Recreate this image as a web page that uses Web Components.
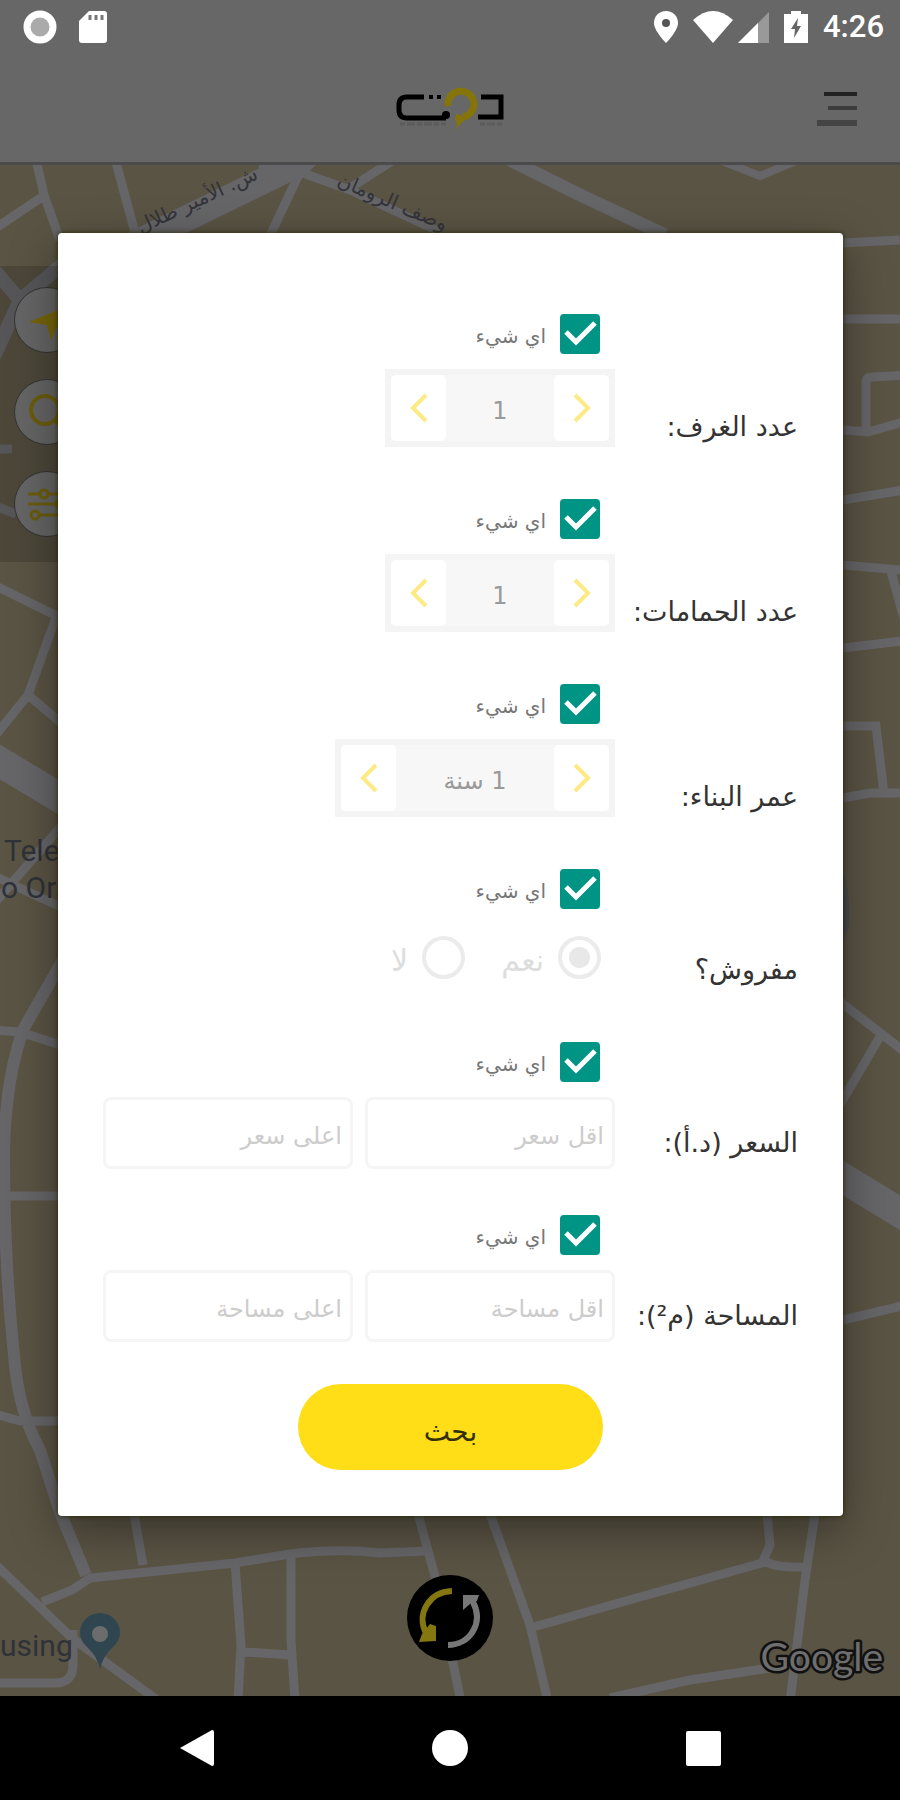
<!DOCTYPE html>
<html lang="ar">
<head>
<meta charset="utf-8">
<meta name="viewport" content="width=device-width, initial-scale=1">
<title>دوت</title>
<style>
  body {
    margin: 0;
    min-height: 100vh;
    display: flex;
    flex-direction: column;
    background: #000;
    font-family: "DejaVu Sans", "Noto Sans", sans-serif;
  }

  .stage {
    flex: 1;
    display: grid;
    grid-template-columns: minmax(0, 1fr);
  }

  .stage > * {
    grid-area: 1 / 1;
  }
</style>
</head>
<body>
  <status-bar time="4:26"></status-bar>
  <app-header></app-header>
  <main class="stage">
    <map-view></map-view>
    <filter-dialog>
      <filter-row label="عدد الغرف:"><number-stepper value="1"></number-stepper></filter-row>
      <filter-row label="عدد الحمامات:"><number-stepper value="1"></number-stepper></filter-row>
      <filter-row label="عمر البناء:"><number-stepper value="1 سنة" wide></number-stepper></filter-row>
      <filter-row label="مفروش؟"><yes-no></yes-no></filter-row>
      <filter-row label="السعر (د.أ):"><range-inputs min="اقل سعر" max="اعلى سعر"></range-inputs></filter-row>
      <filter-row label="المساحة (م²):"><range-inputs min="اقل مساحة" max="اعلى مساحة"></range-inputs></filter-row>
    </filter-dialog>
  </main>
  <nav-bar></nav-bar>

<script>
// Status bar at the very top: notification icons, system icons, clock
class StatusBar extends HTMLElement {
  constructor() {
    super();
    this.attachShadow({ mode: "open" });

    this.shadowRoot.innerHTML = `
      <style>
        :host {
          display: flex;
          align-items: center;
          justify-content: space-between;
          height: 54px;
          padding: 0 16px 0 22px;
          background: #676767;
          color: #fff;
          font-family: Roboto, sans-serif;
        }

        div {
          display: flex;
          align-items: center;
        }

        .left { gap: 20px; }
        .right { gap: 14px; }
        .net { gap: 4px; }
        svg { display: block; }

        time {
          font-size: 31px;
          font-weight: 500;
          line-height: 36px;
        }
      </style>
      <div class="left">
        <svg width="36" height="36"><circle cx="18" cy="18" r="13" fill="#aaa" stroke="#fff" stroke-width="7"/></svg>
        <svg width="30" height="34">
          <path d="M11 1H26Q29 1 29 4V30Q29 33 26 33H4Q1 33 1 30V11Z" fill="#fff"/>
          <path d="M12 5v5M18 5v5M24 5v5" stroke="#777" stroke-width="3"/>
        </svg>
      </div>
      <div class="right">
        <svg width="26" height="34">
          <path d="M13 1C6 1 1 6 1 13C1 21 13 33 13 33S25 21 25 13C25 6 20 1 13 1Z" fill="#fff"/>
          <circle cx="13" cy="13" r="4" fill="#555"/>
        </svg>
        <div class="net">
          <svg width="40" height="34"><path d="M0 10Q20-8 40 10L20 33Z" fill="#fff"/></svg>
          <svg width="32" height="34">
            <path d="M32 2V33H1Z" fill="#999"/>
            <path d="M21 13V33H1Z" fill="#fff"/>
          </svg>
        </div>
        <svg width="26" height="34">
          <path d="M8 1H18V4H25V33H1V4H8Z" fill="#fff"/>
          <path d="M15 8L8 19H12L11 28L18 16H14Z" fill="#666"/>
        </svg>
        <time></time>
      </div>
    `;
  }

  connectedCallback() {
    this.shadowRoot.querySelector("time").textContent = this.getAttribute("time") || "";
  }
}

// App header: logo in the middle, menu button on the right
class AppHeader extends HTMLElement {
  constructor() {
    super();
    this.attachShadow({ mode: "open" });

    this.shadowRoot.innerHTML = `
      <style>
        :host {
          display: grid;
          grid-template-columns: 1fr auto 1fr;
          align-items: center;
          height: 108px;
          padding: 0 42px;
          background: #676767;
          border-bottom: 3px solid #4b4b4b;
        }

        svg { display: block; }
        .logo { grid-column: 2; }

        button {
          justify-self: end;
          padding: 0;
          border: 0;
          background: none;
        }
      </style>
      <svg class="logo" width="112" height="48" role="img" aria-label="دوت" fill="none">
        <path d="M30 13H13Q5 13 5 21V26Q5 34 13 34H52" stroke="#000" stroke-width="5"/>
        <circle cx="52" cy="31" r="4" fill="#000"/>
        <path d="M35 13H39M43 13H47" stroke="#000" stroke-width="4"/>
        <path d="M54 22A13 13 0 1 1 69 33" stroke="#84740a" stroke-width="7"/>
        <path d="M62 30L75 34Q66 38 62 46Q64 39 61 35Z" fill="#84740a"/>
        <path d="M87 13H107V33H84" stroke="#000" stroke-width="5"/>
        <path d="M6 40H52M86 40H108" stroke="#5c5c5c" stroke-width="3" stroke-dasharray="5 2 8 2"/>
      </svg>
      <button type="button" aria-label="القائمة">
        <svg width="42" height="38">
          <path d="M8 5H41" stroke="#222" stroke-width="4"/>
          <path d="M12 19H41" stroke="#3c3c3c" stroke-width="4"/>
          <path d="M1 34H41" stroke="#444" stroke-width="6"/>
        </svg>
      </button>
    `;
  }
}

// Map with its streets, place labels and floating buttons
class MapView extends HTMLElement {
  constructor() {
    super();
    this.attachShadow({ mode: "open" });

    this.shadowRoot.innerHTML = `
      <style>
        :host {
          display: block;
          position: relative;
          overflow: hidden;
          background: #5a5444;
        }

        .map {
          position: absolute;
          inset: 0;
          width: 100%;
          height: 100%;
        }

        .tools {
          position: absolute;
          top: 101px;
          left: 0;
          display: flex;
          flex-direction: column;
          gap: 26px;
          padding: 21px 14px 25px;
          background: #00000026;
        }

        button {
          display: grid;
          place-items: center;
          padding: 0;
          border: 0;
          border-radius: 50%;
        }

        .tools button {
          width: 66px;
          height: 66px;
          background: #656565;
          border: 1px solid #333;
        }

        .refresh {
          position: absolute;
          bottom: 35px;
          left: calc(50% - 43px);
          width: 86px;
          height: 86px;
          background: #000;
        }
      </style>
      <svg class="map" viewBox="0 165 900 1531" preserveAspectRatio="xMidYMid slice">
        <g fill="none" stroke="#666568" stroke-width="9">
          <path d="M-10 232L42 197M35 155L44 195L60 240M114 155L137 240M300 172L268 240M300 172L350 190L440 232M350 188L400 156"/>
          <path d="M130 246L300 163" stroke-width="26"/>
          <path d="M258 163H318L300 180L262 184Z" fill="#666568" stroke="none"/>
          <path d="M500 155L580 195L665 235" stroke-width="13"/>
          <path d="M722 161L760 176L796 161" stroke-width="8"/>
          <path d="M843 243L900 240M843 319H900M843 430L868 432L910 420M866 430V382Q866 377 873 377L910 375"/>
          <path d="M843 500L910 489M843 565L910 571M890 568L910 640M843 648L910 640"/>
          <path d="M843 726H876L884 794M843 798L870 793H900"/>
          <path d="M830 994L910 1056M881 1035L838 1108M843 1320L910 1304"/>
          <path d="M820 1164L920 1225" stroke-width="30"/>
          <path d="M-10 365L20 300L70 258M-6 270L20 300" stroke-width="14"/>
          <path d="M0 449H12M-5 506L16 514"/>
          <path d="M-10 583L65 620M58 612L28 695L-10 742M28 695L65 726"/>
          <path d="M-20 750L80 810" stroke-width="30"/>
          <path d="M65 822L-10 908M-10 874L65 909"/>
          <path d="M64 958L24 1028Q6 1075 4 1150Q4 1260 14 1355Q18 1410 40 1450L60 1512L86 1575" stroke-width="12"/>
          <path d="M-5 1030L20 1032L60 1045M6 1196H60M-5 1414L20 1421H60"/>
          <path d="M-10 1559L72 1638L164 1705M42 1602L72 1590L90 1578L235 1563L290 1554Q340 1548 380 1553L428 1551"/>
          <path d="M134 1514L143 1565M235 1563L241 1645L238 1700M291 1556V1640L295 1700M245 1652L290 1655M418 1514L436 1580L461 1702"/>
          <path d="M73 1630V1665Q73 1683 55 1683H0"/>
          <path d="M490 1514L530 1625L548 1702M530 1628L640 1597L762 1563L770 1545L767 1514M765 1561Q775 1568 805 1567M815 1514L805 1580L790 1702M610 1698L690 1680L770 1668"/>
        </g>
        <g fill="#33333a" font-family="DejaVu Sans, sans-serif" font-size="20" text-anchor="middle">
          <text transform="translate(200 206) rotate(-25)">ش. الأمير طلال</text>
          <text transform="translate(390 208) rotate(23)">وصف الرومان</text>
        </g>
        <g fill="#2f3238" font-family="Roboto, sans-serif" font-size="30">
          <text x="4" y="861">Tele</text>
          <text x="1" y="898">o Ora</text>
          <text x="0" y="1656">using</text>
        </g>
        <path d="M843 870Q850 890 849 925L843 945Z" fill="#4c4d55"/>
        <path d="M100 1669Q97 1656 88 1648Q80 1641 80 1633A20 20 0 1 1 120 1633Q120 1641 112 1648Q103 1656 100 1669Z" fill="#2f4650"/>
        <circle cx="100" cy="1634" r="8" fill="#6c6c6c"/>
        <text x="883" y="1671" text-anchor="end" font-family="Lato, sans-serif" font-size="39" fill="#6e6e6e" stroke="#111" stroke-width="5" paint-order="stroke" stroke-linejoin="round">Google</text>
      </svg>
      <div class="tools">
        <button type="button" aria-label="موقعي">
          <svg width="44" height="44"><path d="M4 24L40 9L26 42L22 27Z" fill="#75650a"/></svg>
        </button>
        <button type="button" aria-label="بحث في الخريطة">
          <svg width="44" height="44" fill="none" stroke="#6b5d0c" stroke-width="4"><circle cx="20" cy="20" r="14"/><path d="M30 30L41 41"/></svg>
        </button>
        <button type="button" aria-label="تصفية">
          <svg width="44" height="44" fill="none" stroke="#6b5d0c" stroke-width="3">
            <path d="M3 12H14M24 12H41M3 22H30M40 22H43M14 33H41"/>
            <circle cx="19" cy="12" r="4"/><circle cx="35" cy="22" r="4"/><circle cx="10" cy="33" r="4"/>
          </svg>
        </button>
      </div>
      <button class="refresh" type="button" aria-label="تحديث">
        <svg width="86" height="86" fill="none" stroke-width="6">
          <path d="M45 16C22 17 9 39 19 58" stroke="#847710"/>
          <path d="M12 67L15 59L23 49L29 51V66Z" fill="#847710"/>
          <path d="M41 70C63 70 77 48 66 27" stroke="#777"/>
          <path d="M56 35V20L72 20L70 26L63 29Z" fill="#777"/>
        </svg>
      </button>
    `;
  }
}

// White card that holds the filter rows and the search button
class FilterDialog extends HTMLElement {
  constructor() {
    super();
    this.attachShadow({ mode: "open" });

    this.shadowRoot.innerHTML = `
      <style>
        :host {
          display: block;
          position: relative;
          align-self: start;
          margin: 68px 57px 180px 58px;
          padding: 81px 45px 46px;
          background: #fff;
          border-radius: 4px;
          box-shadow: 0 0 5px #2a2706, 0 14px 48px #0006;
          direction: rtl;
        }

        form {
          display: flex;
          flex-direction: column;
          gap: 46px;
        }

        button {
          align-self: center;
          width: 305px;
          height: 86px;
          margin-top: -4px;
          padding: 8px 0 0;
          border: 0;
          border-radius: 43px;
          background: #ffdd17;
          color: #33300a;
          font: inherit;
          font-size: 28px;
        }
      </style>
      <form>
        <slot></slot>
        <button type="button">بحث</button>
      </form>
    `;
  }
}

// One filter: its caption, the "anything" tick box and the control below it
class FilterRow extends HTMLElement {
  constructor() {
    super();
    this.attachShadow({ mode: "open" });

    this.shadowRoot.innerHTML = `
      <style>
        :host {
          display: flex;
          align-items: flex-end;
        }

        .caption {
          flex: 0 0 183px;
          padding-bottom: 8px;
          color: #333;
          font-size: 27px;
          line-height: 36px;
          white-space: nowrap;
        }

        .control {
          flex: 1;
          min-width: 0;
          display: flex;
          flex-direction: column;
          align-items: flex-start;
          gap: 15px;
        }

        label {
          display: grid;
          grid-template-columns: 40px auto;
          column-gap: 14px;
          align-items: center;
          margin-right: 15px;
          color: #777;
          font-size: 20px;
        }

        span { line-height: 36px; }
        label span { padding-top: 4px; }

        input, svg {
          grid-area: 1 / 1;
          width: 40px;
          height: 40px;
          margin: 0;
        }

        input {
          appearance: none;
          box-sizing: border-box;
          border-radius: 4px;
          background: #fff;
          border: 4px solid #009485;
        }

        input:checked { background: #009485; }
        input:not(:checked) + svg { visibility: hidden; }
        svg { pointer-events: none; }
        ::slotted(*) { align-self: stretch; }
      </style>
      <span class="caption" id="caption"></span>
      <div class="control" role="group" aria-labelledby="caption">
        <label>
          <input type="checkbox" checked>
          <svg viewBox="0 0 40 40" fill="none"><path d="M6 18L16 28L35 9" stroke="#fff" stroke-width="5"/></svg>
          <span>اي شيء</span>
        </label>
        <slot></slot>
      </div>
    `;
  }

  connectedCallback() {
    this.shadowRoot.getElementById("caption").textContent = this.getAttribute("label") || "";
  }
}

// Value with a step button on each side
class NumberStepper extends HTMLElement {
  constructor() {
    super();
    this.attachShadow({ mode: "open" });

    this.shadowRoot.innerHTML = `
      <style>
        :host {
          display: block;
          height: 84px;
        }

        .box {
          display: flex;
          align-items: stretch;
          box-sizing: border-box;
          width: 230px;
          height: 78px;
          border: 6px solid #f4f4f4;
          background: #f7f7f7;
        }

        :host([wide]) .box { width: 280px; }

        button {
          display: grid;
          place-items: center;
          width: 55px;
          padding: 0;
          border: 0;
          border-radius: 5px;
          background: #fff;
        }

        output {
          flex: 1;
          padding-top: 6px;
          color: #999;
          font-size: 24px;
          line-height: 60px;
          text-align: center;
        }
      </style>
      <div class="box">
        <button type="button" disabled aria-label="زيادة">
          <svg width="18" height="30" fill="none"><path d="M2 2L15 15L2 28" stroke="#fdea85" stroke-width="4"/></svg>
        </button>
        <output></output>
        <button type="button" disabled aria-label="إنقاص">
          <svg width="18" height="30" fill="none"><path d="M16 2L3 15L16 28" stroke="#fdea85" stroke-width="4"/></svg>
        </button>
      </div>
    `;
  }

  connectedCallback() {
    this.shadowRoot.querySelector("output").textContent = this.getAttribute("value") || "";
  }
}

// Yes / no radio pair
class YesNo extends HTMLElement {
  constructor() {
    super();
    this.attachShadow({ mode: "open" });

    this.shadowRoot.innerHTML = `
      <style>
        :host {
          display: flex;
          align-items: center;
          gap: 36px;
          box-sizing: border-box;
          height: 72px;
          padding: 0 14px 6px 0;
        }

        label {
          display: flex;
          align-items: center;
          gap: 14px;
          color: #ddd;
          font-size: 30px;
          line-height: 36px;
        }

        span { padding-top: 8px; }

        input {
          appearance: none;
          box-sizing: border-box;
          width: 43px;
          height: 43px;
          margin: 0;
          border: 4px solid #ebebeb;
          border-radius: 50%;
        }

        input:checked {
          background: radial-gradient(circle, #e8e8e8 10px, #fff 11px);
        }
      </style>
      <label><input type="radio" name="furnished" disabled checked><span>نعم</span></label>
      <label><input type="radio" name="furnished" disabled><span>لا</span></label>
    `;
  }
}

// Lowest and highest value next to each other
class RangeInputs extends HTMLElement {
  constructor() {
    super();
    this.attachShadow({ mode: "open" });

    this.shadowRoot.innerHTML = `
      <style>
        :host {
          display: flex;
          gap: 12px;
        }

        input {
          flex: 1;
          min-width: 0;
          box-sizing: border-box;
          height: 72px;
          padding: 6px 8px 0;
          border: 3px solid #f5f5f5;
          border-radius: 8px;
          background: #fff;
          font: inherit;
          font-size: 24px;
        }

        input::placeholder {
          color: #ccc;
          opacity: 1;
        }
      </style>
      <input type="text" id="min" disabled>
      <input type="text" id="max" disabled>
    `;
  }

  connectedCallback() {
    ["min", "max"].forEach((name) => {
      const input = this.shadowRoot.getElementById(name);
      input.placeholder = this.getAttribute(name) || "";
      input.setAttribute("aria-label", input.placeholder);
    });
  }
}

// Android navigation: back, home, recent apps
class NavBar extends HTMLElement {
  constructor() {
    super();
    this.attachShadow({ mode: "open" });

    this.shadowRoot.innerHTML = `
      <style>
        :host {
          display: flex;
          justify-content: center;
          align-items: center;
          gap: 215px;
          height: 104px;
          background: #000;
        }

        button {
          padding: 0;
          border: 0;
          background: none;
        }

        svg { display: block; }
      </style>
      <button type="button" aria-label="رجوع"><svg width="38" height="38"><path d="M2 19L34 1Q36 1 36 3V35Q36 37 34 37Z" fill="#fff"/></svg></button>
      <button type="button" aria-label="الرئيسية"><svg width="38" height="38"><circle cx="19" cy="19" r="18" fill="#fff"/></svg></button>
      <button type="button" aria-label="التطبيقات"><svg width="38" height="38"><rect x="2" y="2" width="35" height="35" rx="2" fill="#fff"/></svg></button>
    `;
  }
}

customElements.define("status-bar", StatusBar);
customElements.define("app-header", AppHeader);
customElements.define("map-view", MapView);
customElements.define("filter-dialog", FilterDialog);
customElements.define("filter-row", FilterRow);
customElements.define("number-stepper", NumberStepper);
customElements.define("yes-no", YesNo);
customElements.define("range-inputs", RangeInputs);
customElements.define("nav-bar", NavBar);
</script>
</body>
</html>
